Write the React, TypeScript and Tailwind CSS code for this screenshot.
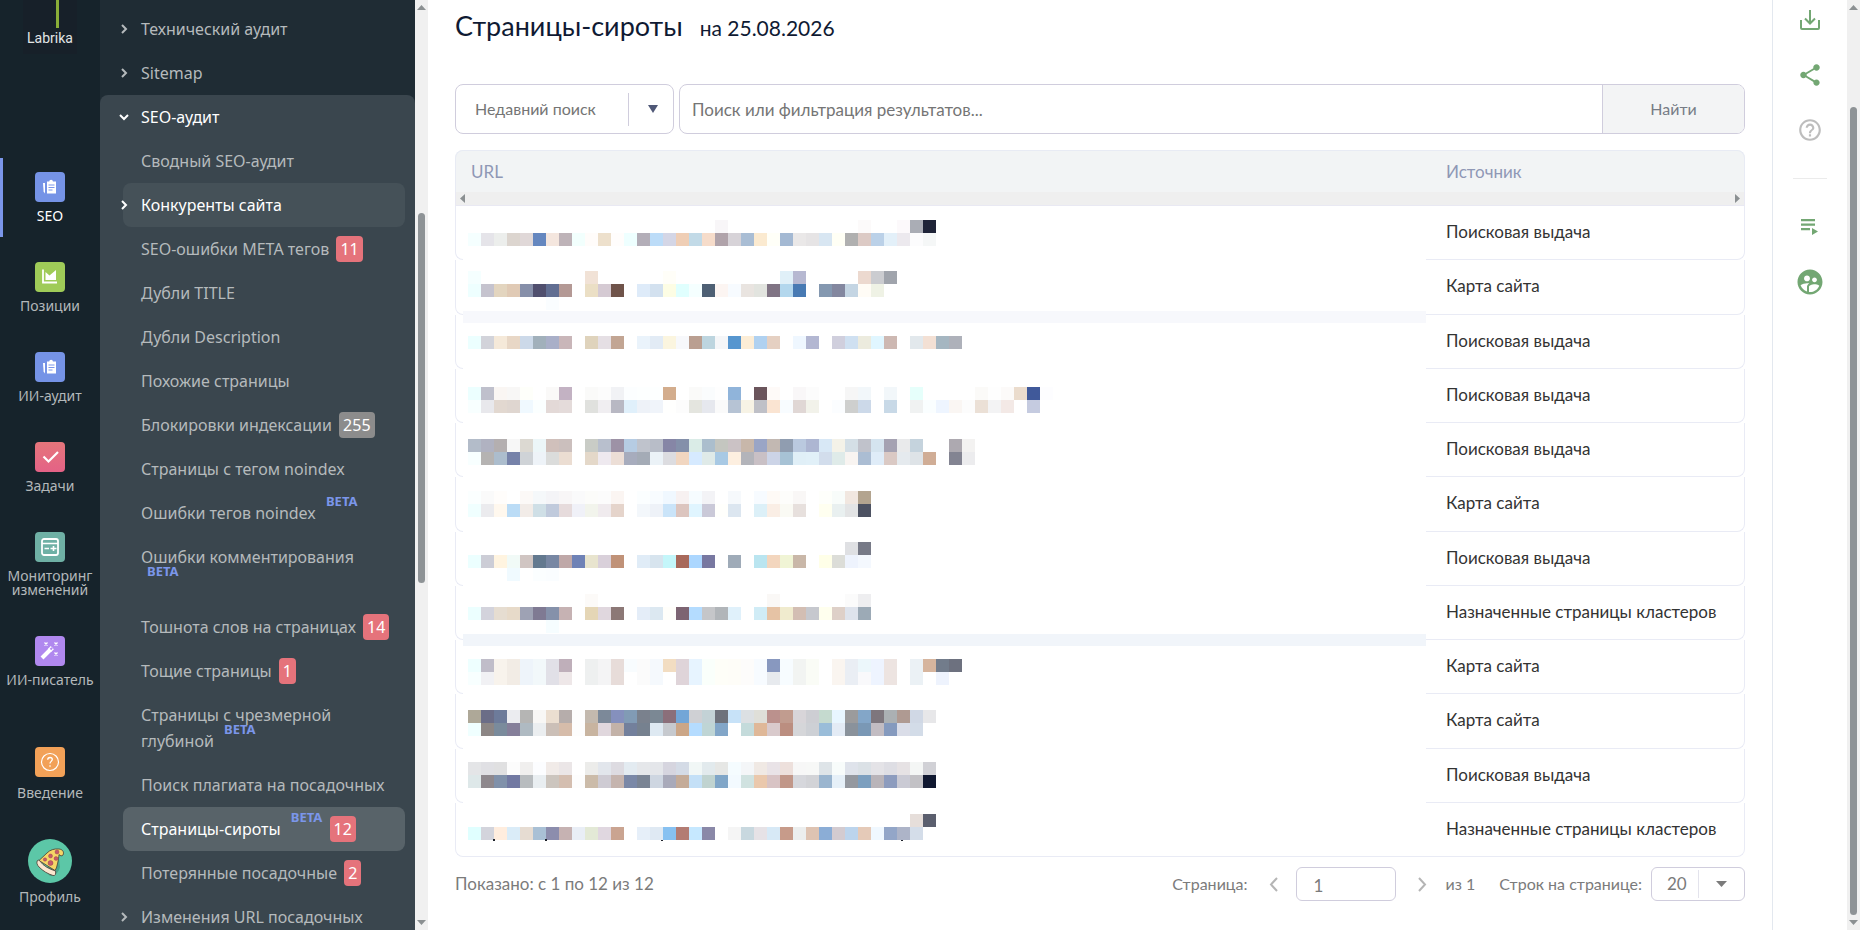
import { MdHelpOutline, MdShare, MdSupervisedUserCircle } from "react-icons/md";

type MenuItem = {
    label: string;
    badge?: string;
    muted?: boolean;
    beta?: boolean;
    arrow?: boolean;
    state?: "hover" | "active";
};

const menuItems: MenuItem[] = [
    { label: "Сводный SEO-аудит" },
    { label: "Конкуренты сайта", arrow: true, state: "hover" },
    { label: "SEO-ошибки META тегов", badge: "11" },
    { label: "Дубли TITLE" },
    { label: "Дубли Description" },
    { label: "Похожие страницы" },
    { label: "Блокировки индексации", badge: "255", muted: true },
    { label: "Страницы с тегом noindex" },
    { label: "Ошибки тегов noindex", beta: true },
    { label: "Ошибки комментирования", beta: true },
    { label: "Тошнота слов на страницах", badge: "14" },
    { label: "Тощие страницы", badge: "1" },
    { label: "Страницы с чрезмерной глубиной", beta: true },
    { label: "Поиск плагиата на посадочных" },
    { label: "Страницы-сироты", beta: true, badge: "12", state: "active" },
    { label: "Потерянные посадочные", badge: "2" },
    { label: "Изменения URL посадочных", arrow: true },
];

const SEARCH = "Поисковая выдача";
const SITEMAP = "Карта сайта";
const CLUSTERS = "Назначенные страницы кластеров";

const sources = [
    SEARCH, SITEMAP, SEARCH, SEARCH, SEARCH, SITEMAP,
    SEARCH, CLUSTERS, SITEMAP, SITEMAP, SEARCH, CLUSTERS,
];

// hidden addresses: [top, first column, colours], every block is 13x13
const mosaic: [number, number, string][] = [
    [14, 19, "f8f6f8"],
    [14, 30, "fcfafa"],
    [14, 33, "fcf9fb aaadb5 1f2438"],
    [27, 0, "f5ffff e5e4e9 eceeec dcd5cf e0d8d8 6587bf f4e6de beb3b8 f2fffd fffcfa ede0cc fffdfc eeffff b3aeb8 bcdcf8 d4d6e6 efceb5 c2dae7 f6dcca b0a3aa d7d3d8 a9bdd4 fbead0 fffff8 a4b9d3 eae8e8 e6e4e5 d8e6f2 fffff5 b0b0b0 dccac5 bbd1e8 e3f0f9 ece9ee fcfcfd f5f7f7"],
    [65, 0, "f5ffff"],
    [65, 9, "f1e2d6"],
    [65, 15, "fffef8"],
    [65, 24, "e0f0f8 b6b8d1"],
    [65, 30, "ecd9cf cbccd0 a0a4ac"],
    [78, 0, "eeffff c5c3ce e3d5bf e0cab5 868fa9 504f6e 616e92 b49995"],
    [78, 9, "ebdfc5 d5cad3 6f534a"],
    [78, 13, "deebf9 d3e1ef fdfde4 e0fffe f5ffff 4e6074 fcf5f2 f7fbff e9e4e0 e2e4df 807484 b3d7ed 487ab3"],
    [78, 27, "8498b0 83879f c4d5e3 fffcf6 eff2e5"],
    [91, 6, "fafdff"],
    [130, 0, "ecffff d2d3da f5e9d9 e8d7c6 ccd9e9 a1b0bb a9afc8 c9b6b9"],
    [130, 9, "dfd3bc e5dfe4 c2a593"],
    [130, 13, "eaf3fb e2ebf5 fbf5df f7f8fb ba9f91 bdd5df f5f6f8 5796cf fcedd6 b0d1f0 e5d0c2"],
    [130, 25, "eff7ff b3b7d2"],
    [130, 28, "d0cfdd cfe0f1 ecebde e0f6ff cdb8b2"],
    [130, 34, "e2e8ec f3e0d4 a5b6c1 aeb1ba"],
    [181, 0, "ecffff bfc0cc faf6f3 f8f7f6 fefffa"],
    [181, 6, "faf9f8 c3b2c3"],
    [181, 9, "fafaf9 fcfcfc f1f2f5 fcfeff fdffff fdffff d3ad8d"],
    [181, 17, "fafaf9 fafcfd fefefe 90b4da"],
    [181, 22, "6b555c fefaf8"],
    [181, 25, "f9f7f8 fcfcfc"],
    [181, 29, "f6f6f6 f2f7fa"],
    [181, 32, "f2f7fa"],
    [181, 34, "e6fffb"],
    [181, 39, "fbfaf8 fefefe fcfaf9 ebdccd 40599a fdfdff"],
    [194, 0, "f8ffff e8e8ec e2d8d0 dfd6d0 f0f9ff fbffff e3d9d7 e4dbda"],
    [194, 9, "e0e1de f0eef1 b8b8c3 e0f0fb eef2f8 f0f4fa fffffe fcfcfc e4e5df e6e8ee fafafa b6c3d4 f7f3e5 bfc0c7 fae4d2 f8fcff e0d7d5 f2f2ea"],
    [194, 28, "fbfdff cecfce ccd9e9"],
    [194, 32, "c8d9e7"],
    [194, 34, "f0f2f2 fafeff eef5ff faf6f3 fcfcfc ebe0d6 f3f3f4 f3e9e6"],
    [194, 43, "c5cbe0"],
    [233, 0, "b3bcc9 b0b2c1 b4afb0 f7f7f7 dcd9d2 ecf6f8 d0c0bb cbbfbd"],
    [233, 9, "c9ccc6 b8bfcd 9d92a6 b6cce3 bfc3cc b8bdc8 8686a6 8490aa daece7 abbecd c4c6c0 cbc2c5 c8b7aa 9aa5c6 c2b8b2 909db0 bac9df adb6d2 d8e8f6 f4f2e8 d4dfe6 c0c2cb d5e4ef a5a2b2 e9eaeb c5d3dd"],
    [233, 37, "ada9b0 f3f2f1"],
    [246, 0, "f8ffff b5b3b2 acbdcd 7682a9 cfd3d7 eef3f8 dbdcdb ebddd2"],
    [246, 9, "e4d8c9 eee9ef ecded6 a7acbd a4abb6 ebf2f7 dcdce0 f1d6c0 d6eaff dfeae8 a8c9e4 fdefe0 b3b4ba c9c0c5 ccd4e7 a7c2d5 e0eff7 e1f0f8 d2ddec dfebe9 f8f4f1 abbdd3 dfecf8 dac9c4 e5eaee dee3e7 d0ad96"],
    [246, 37, "838492 ececee"],
    [285, 0, "fbffff fafafa fffdfb"],
    [285, 4, "fcf9f7 f5f8fa f4f4f7 f8f6f7 fafafb fcfcfa fcfcfc fbf5f2"],
    [285, 13, "fbfeff f8fcff f0f8ff f7f1f1 f6fcff f3f3f6"],
    [285, 20, "f6f9fc"],
    [285, 22, "f7fbff fefaf6 fdfdfb f9f7f6"],
    [285, 27, "fefffb f8fcfa f1e7e0 b3a48f"],
    [298, 0, "f0ffff ebebee fff8ee bbdcf6 f2ece8 cfdfe6 c0cadc e6dbdc f0f1f8 f2f4ec f0ebee e5d4cb"],
    [298, 13, "f3f7fb eef2f8 cae4f9 dcc5bf e0f5ff cac9d8 fffffc dce6f0"],
    [298, 22, "dcf0f8 faeee5 fafaf4 e7e0dd"],
    [298, 27, "fffff0 e9f0f0 e3e4e5 4d5262"],
    [336, 29, "dfe0e3 777a87"],
    [349, 0, "ecffff cccdd6 fff4e0 f1faf7 d0c5c2 63798f 7887a3 bfa8a8 6f82b6 e8e4ce d9d0da c09278"],
    [349, 13, "e0ecf7 d7e4ee c4f6fa a8695b acd7ff 7878a1"],
    [349, 20, "9fabb8"],
    [349, 22, "bae5f0 f3d6be f0f4d5 c9b7a8"],
    [349, 27, "ffffe8 dcddd8 eef3fd f4f8fe"],
    [362, 3, "f0faff"],
    [362, 5, "fbfeff fafdff"],
    [388, 9, "fcfaf8"],
    [388, 23, "faf8f6"],
    [388, 29, "fbfbfb eeeef0"],
    [401, 0, "ecffff d3d3dc e6ddd1 e7dac9 9ea2b4 7f7a93 8591aa c6b2b3"],
    [401, 9, "e5d6b6 e0d7de 8c7876"],
    [401, 13, "e4edf8 dce8f1 fffefa 7d6472 b4dcff c5c6c9 b1b5b9 e0f1fb"],
    [401, 22, "d0ecf6 e6c3a5 f0ebce d3beb3 c6c8ce ffffee ded0c8 dee3ec 9caab6"],
    [414, 6, "f6fdff"],
    [453, 0, "eeffff c0bdc9 f8f3ec f2ece5 eef4fa f2f8fa e1e0e7 bfafba"],
    [453, 9, "eef0f0 f4f4f5 e7dcd9 f8fcfe fbfbfb f5f9fd f2ddc2 dfd4d9 e7f4ff fafffb fefef8 fefdf8 fdfcfb f7fbff 8898bf f7fcff f2f4f2 fafcf6"],
    [453, 28, "faf5f0 eaeef4 ecf7fb eef4ff ede4e1"],
    [453, 34, "ebf1f5 d6b59e 727c8b 6d717f"],
    [466, 0, "f8ffff f1f1f4 f8f3ec f2ece5 eef4fa f2f8fa e1e0e7 eee7e8"],
    [466, 9, "eef0f0 f4f4f5 e7dcd9"],
    [466, 13, "fbfbfb f5f9fd"],
    [466, 16, "dfd4d9 e7f4ff fafffb fefef8 fefdf8 fdfcfb f7fbff e7eaee f7fcff f2f4f2 fafcf6"],
    [466, 28, "faf5f0 eaeef4 f9f9fb eef4ff ede4e1"],
    [466, 34, "ebf1f5"],
    [466, 36, "eef3fd"],
    [504, 0, "aea898 6b6d87 6d7b9a ebecf0 b5b5b4 f8f7f5 ebded0 b6adab fdfdfd c3b9ae 7c8999 8590bd 819bb5 7a818d 7b8894 8b6f7a 73a6d7 cfd0d4 c3d2d6 6e727c c7e2f8 dce0e3 dfdfd8 bb918d c19c8f d8d5d9 cdced3 c5dacf e8f6ff 9b9b9c 83a6c8 7e767d abb0b3 af9a92 d0d8e5 e7e7e9"],
    [517, 0, "f0ffff 8c8685 7a8b9c 857f9a afbac2 ebeef0 cbbfb7 d6bcaa fdfdfd c8b4a0 e0d7dd c3b2a8 73809c 76818f dee9f2 c6c9ce cba687 b5dcff bfd5d5 82a6c8"],
    [517, 21, "c4dbdb dfb898 d9cacc bb8e80 d5d6d9 cdd0d5 9abdd9 e3ebf5 8a929b 7a98b5 c2bcc2 859abe dadde8 d3dce8"],
    [556, 0, "e4e5e7 e0e0e4 e0e0e1 fcfcfc f0efee fcfdff f1ebe8 ebe6e7"],
    [556, 9, "ececea e2e6ec dddbe1 e3ebf1 e5e7ea e4e6ea d6d5df d4dbe6 f1f7f6 e2eaed e6e7e5 f5fcff f4f6f8 f0e9e4 e9e3e7 ede0dc f7f7f7 f7f8f7 dee4e8 f8fcfb dfe3eb dbe1e6 e4e3e7 dedee4 e6e2e4 f4f6f5 d1d1d6"],
    [569, 0, "dee8e9 8e888d 8091aa 7279a2 b8bcbf e9eef1 ccc5be d4beb0 fdfdfd cbbba9 cecbd3 c5b4ae 7a88a7 7a8494 ced6e1 a9aaba c4ab98 c4e0f7 c0d3d0 80a6c8 f3faff d0e2e0 eac8ac d8c3c4 c19789 d6d7dc d2d3d7 9ab5cf e6f0f8 94989f 7c9fbf b9b4b9 8d9cbe cacad4 c2c1c5 101830"],
    [608, 34, "e6deda 5b5f6e"],
    [621, 0, "e0ffff d3d4dc ffedde daecf8 e6dcd2 a9c0d5 8c8dad c6b2b2 e9eef6 e3e9d6 e0d7e0 caa491"],
    [621, 13, "e6eff9 dfe9f3 87c1f1 b37c73 c6e8ff 8a88a8"],
    [621, 20, "f5f5f5 c8d8df e6e2e6 d7e9f6 c79b8a eceeee dec3b2 8badd6 d3cbd0 bcd4ec e5cab8 f0f8ff 93a6c8 adb4c8 d4dde9"],
];

const Mosaic = () => (
    <svg width="620" height="649" aria-hidden="true" shapeRendering="crispEdges">
        {mosaic.map(([top, col, colors]) =>
            colors.split(" ").map((color, i) => (
                <rect key={`${top}-${col + i}`} x={5 + (col + i) * 13} y={top} width="13" height="13" fill={`#${color}`} />
            ))
        )}
        <path d="M30 633h2v2h-2zM82 633h2v2h-2zM198 634h2v1h-2zM438 634h2v1h-2z" fill="#20242c" />
    </svg>
);

const Triangle = ({ className, points }: { className: string; points: string }) => (
    <svg className={className} viewBox="0 0 10 10" preserveAspectRatio="none" aria-hidden="true">
        <polygon points={points} fill="currentColor" />
    </svg>
);

const UP = "5,0 10,10 0,10";
const DOWN = "0,0 10,0 5,10";

const ScrollBar = ({ before, thumb, after }: { before: string; thumb: string; after: string }) => (
    <div className="flex h-full w-[13px] shrink-0 flex-col items-center bg-[#f0f0f0] py-[5px] text-[#8b9092]" aria-hidden="true">
        <Triangle className="h-[5px] w-[9px]" points={UP} />
        <div className={before} />
        <div className={`w-[7px] rounded-full bg-[#8e9396] ${thumb}`} />
        <div className={after} />
        <Triangle className="h-[5px] w-[9px]" points={DOWN} />
    </div>
);

const Chevron = ({ down }: { down?: boolean }) => (
    <svg width="12" height="12" viewBox="0 0 12 12" fill="none" stroke="currentColor" strokeWidth="2" aria-hidden="true">
        <path d={down ? "M2 4l4 4 4-4" : "M4 2l4 4-4 4"} />
    </svg>
);

const ClipboardIcon = () => (
    <svg width="30" height="30" viewBox="0 0 30 30" aria-hidden="true">
        <path d="M12 9.500h2.300c0-1 .8-1.800 1.800-1.800s1.800.8 1.800 1.800H21v12h-9z" fill="#fff" />
        <path d="M8 11h2v8.500l-.5 2-.9-2z" fill="#fff" />
        <path d="M13.500 13h6M13.500 15.500h6M13.500 18h4" stroke="#7b96ea" strokeWidth="1" />
    </svg>
);

const ChartIcon = () => (
    <svg width="30" height="30" viewBox="0 0 30 30" aria-hidden="true">
        <path d="M8 7.500v13h14" stroke="#fff" strokeWidth="1.800" fill="none" />
        <path d="M10.500 10l4 3.500L21 8v10H10.500z" fill="#fff" />
    </svg>
);

const CheckIcon = () => (
    <svg width="30" height="30" viewBox="0 0 30 30" aria-hidden="true">
        <path d="M8.500 14.500l5 5L23 10" stroke="#fff" strokeWidth="2.200" fill="none" />
    </svg>
);

const MonitorIcon = () => (
    <svg width="30" height="30" viewBox="0 0 30 30" fill="none" stroke="#fff" aria-hidden="true">
        <rect x="7" y="7" width="16" height="16" rx="2" strokeWidth="1.800" />
        <path d="M7 11.500h16M9.500 16.500h4.500M15.500 16.500h6M18.500 14v5" strokeWidth="1.600" />
    </svg>
);

const WandIcon = () => (
    <svg width="30" height="30" viewBox="0 0 30 30" fill="none" stroke="#fff" aria-hidden="true">
        <path d="M7 22L15.500 13.500" strokeWidth="4" />
        <path d="M14.500 14.500l2.800-2.800" strokeWidth="4.500" />
        <path d="M15.500 13.500l1.600-1.600" stroke="#b088ef" strokeWidth="2" />
        <path d="M9.500 6.500l3 3m0-3l-3 3M19.500 6.500l3 3m0-3l-3 3M19.500 16.500l3 3m0-3l-3 3" strokeWidth="1.300" />
    </svg>
);

const QuestionIcon = () => (
    <svg width="30" height="30" viewBox="0 0 30 30" fill="none" stroke="#fff" aria-hidden="true">
        <circle cx="15" cy="15" r="8.500" strokeWidth="1.200" />
        <path d="M12.700 12.800c0-1.400 1-2.300 2.300-2.300s2.300.9 2.300 2.100c0 1.700-2.300 1.900-2.300 3.900M15 18.200v1.600" strokeWidth="1.300" />
    </svg>
);

const PizzaAvatar = () => (
    <svg width="44" height="44" viewBox="0 0 44 44" aria-hidden="true">
        <circle cx="22" cy="22" r="22" fill="#5cc7a7" />
        <path d="M16 30l15-10 1 8c-1 5-5 9-10 9z" fill="#48a68a" />
        <path d="M11 21.500L19 14c3-3 7-4.500 12-4 3.500.3 5.500 3 4 6-1 1.500-3 .8-4-.5-.6 6-1.300 8-1.800 10.500-.4 2-1 4-2.200 5.500z" fill="#f6d667" stroke="#4a3b33" strokeWidth=".8" />
        <g fill="#c75a6b" stroke="#8d3b45" strokeWidth=".4">
            <circle cx="29" cy="13" r="2" />
            <circle cx="22.500" cy="17" r="2" />
            <circle cx="28" cy="19.500" r="1.900" />
            <circle cx="17" cy="20.500" r="1.700" />
            <circle cx="22.500" cy="24" r="2.500" />
        </g>
        <path d="M9.500 21.500c-1.300 2-.4 4.500 1.500 6.500 4 4 9 7 14 8.500 2.500.5 2.800-1.500 2.600-4.500C21 30 15.500 27 12 22.200c-.6-1-1.800-1.400-2.500-.7z" fill="#fbe6cf" stroke="#4a3b33" strokeWidth=".8" />
    </svg>
);

type RailItemProps = {
    label: string;
    color?: string;
    active?: boolean;
    className?: string;
    children: React.ReactNode;
};

const RailItem = ({ label, color, active, className = "gap-[7px]", children }: RailItemProps) => (
    <a
        href="#"
        className={`flex flex-col items-center border-l-[3px] py-[14px] pr-[3px] text-center text-sm leading-[14px] ${active ? "border-[#7b96ea] text-white" : "border-transparent text-[#b3b8ba]"} ${className}`}
    >
        <span className={`overflow-hidden rounded ${color ?? ""}`}>{children}</span>
        {label}
    </a>
);

const Rail = () => (
    <nav className="flex w-[100px] shrink-0 flex-col gap-[11px] bg-[#16232b]">
        <a href="#" className="mx-auto flex h-[54px] w-[54px] flex-col items-center bg-[#172029]">
            <span className="ml-[14px] h-[28px] w-[3px] shrink-0 bg-[#8aae38]" />
            <span className="font-['Roboto',sans-serif] text-sm leading-5 text-[#e2e5e6]">Labrika</span>
        </a>
        <RailItem label="SEO" color="bg-[#7593e6]" active className="mt-[93px] gap-[7px]"><ClipboardIcon /></RailItem>
        <RailItem label="Позиции" color="bg-[#9fcb58]"><ChartIcon /></RailItem>
        <RailItem label="ИИ-аудит" color="bg-[#7593e6]"><ClipboardIcon /></RailItem>
        <RailItem label="Задачи" color="bg-linear-to-b from-[#e5757b] to-[#e46286]"><CheckIcon /></RailItem>
        <RailItem label="Мониторинг изменений" color="bg-[#6fb0a5]"><MonitorIcon /></RailItem>
        <RailItem label="ИИ-писатель" color="bg-[#b088ef]"><WandIcon /></RailItem>
        <RailItem label="Введение" color="bg-[#f2a158]" className="mt-[21px] gap-[9px]"><QuestionIcon /></RailItem>
        <RailItem label="Профиль"><PizzaAvatar /></RailItem>
    </nav>
);

const MenuLink = ({ item }: { item: MenuItem }) => {
    const look =
        item.state === "active" ? "bg-[#586369] text-white"
        : item.state === "hover" ? "bg-[#455158] text-white"
        : "text-[#b5babc]";
    return (
        <li>
            <a href="#" className={`relative mr-[10px] ml-[23px] block rounded-lg py-[9px] pr-[12px] pl-[18px] ${look}`}>
                {item.arrow && <span className="absolute top-[16px] -left-[5px]"><Chevron /></span>}
                {item.label}
                {item.beta && <>{" "}<sup className="-top-[13px] ml-[6px] text-[13px] font-bold text-[#7b96ea]">BETA</sup></>}
                {item.badge && (
                    <>
                        {" "}
                        <span className={`ml-[3px] inline-block rounded px-1 text-white ${item.muted ? "bg-[#8c8c8c]" : "bg-[#e5737b]"}`}>{item.badge}</span>
                    </>
                )}
            </a>
        </li>
    );
};

const TopLink = ({ label }: { label: string }) => (
    <a href="#" className="flex h-11 items-center gap-[11px] pl-[18px] text-[#b5babc]">
        <Chevron />
        {label}
    </a>
);

const Sidebar = () => (
    <nav className="w-[315px] shrink-0 overflow-hidden bg-[#1f2c34] pt-[7px] text-base leading-[26px]">
        <TopLink label="Технический аудит" />
        <TopLink label="Sitemap" />
        <div className="rounded-t-lg bg-[#3a464e]">
            <a href="#" className="flex h-11 items-center gap-[11px] pl-[18px] text-white">
                <Chevron down />
                SEO-аудит
            </a>
            <ul>
                {menuItems.map((item) => <MenuLink key={item.label} item={item} />)}
            </ul>
        </div>
    </nav>
);

const SearchBar = () => (
    <div className="flex h-[50px] gap-[5px] text-[#757575]">
        <button className="flex w-[219px] items-center rounded-lg border border-[#d0cddd] pl-[19px] text-base">
            Недавний поиск
            <span className="ml-auto flex h-[33px] w-[45px] items-center justify-center border-l border-[#d0cddd] pl-1 text-[#4f5877]">
                <Triangle className="h-[8px] w-[10px]" points={DOWN} />
            </span>
        </button>
        <form className="flex flex-1 overflow-hidden rounded-lg border border-[#d0cddd]">
            <input
                type="text"
                aria-label="Поиск"
                placeholder="Поиск или фильтрация результатов..."
                className="flex-1 px-3 pt-[2px] text-[17px] placeholder:text-[#757575]"
            />
            <button type="button" className="w-[142px] border-l border-[#d0cddd] bg-[#f3f4f5] text-base text-[#777c86]">Найти</button>
        </form>
    </div>
);

const ResultsTable = () => (
    <div className="relative mt-4">
        <table className="w-full table-fixed border-separate border-spacing-0 text-left text-[17px] text-[#333]">
            <colgroup>
                <col />
                <col className="w-[319px]" />
            </colgroup>
            <thead className="bg-[#f2f4f5] text-[#8f98b5]">
                <tr className="h-[42px]">
                    <th className="rounded-tl-lg border-t border-l border-[#e8ebf4] pl-[15px] font-normal">URL</th>
                    <th className="rounded-tr-lg border-t border-r border-[#e8ebf4] pl-5 font-normal">Источник</th>
                </tr>
                <tr className="h-[14px]">
                    <td colSpan={2} className="border border-t-0 border-[#e9e9f3] bg-[#efefef] p-0">
                        <div className="flex justify-between px-1 text-[#8b9092]">
                            <Triangle className="h-[9px] w-[5px]" points="10,0 10,10 0,5" />
                            <Triangle className="h-[9px] w-[5px]" points="0,0 10,5 0,10" />
                        </div>
                    </td>
                </tr>
            </thead>
            <tbody>
                {sources.map((source, i) => (
                    <tr key={i} className="h-[54px] nth-[4n+2]:h-[55px]">
                        <td className="rounded-bl-lg border-b border-l border-[#e9ebf5]" />
                        <td className="rounded-br-lg border-r border-b border-[#e9ebf5] pb-[2px] pl-5 whitespace-nowrap">{source}</td>
                    </tr>
                ))}
            </tbody>
        </table>
        <div className="absolute top-[56px] right-[319px] bottom-px left-[8px] overflow-hidden bg-white">
            <div className="absolute inset-x-0 top-[105px] h-[12px] bg-[#f7f8fc]" />
            <div className="absolute inset-x-0 top-[428px] h-[12px] bg-[#f1f5fa]" />
            <div className="relative"><Mosaic /></div>
        </div>
    </div>
);

const PageArrow = ({ next }: { next?: boolean }) => (
    <button aria-label={next ? "Следующая страница" : "Предыдущая страница"} className="flex w-[49px] items-center justify-center pl-1 text-[#b5b5b5]">
        <svg width="9" height="15" viewBox="0 0 9 15" fill="none" stroke="currentColor" strokeWidth="2" aria-hidden="true">
            <path d={next ? "M1 1l6 6.500-6 6.500" : "M8 1L2 7.500 8 14"} />
        </svg>
    </button>
);

const Pagination = () => (
    <div className="mt-[10px] flex h-[34px] items-center text-base text-[#7b7b7b]">
        <p className="text-[17px]">Показано: с 1 по 12 из 12</p>
        <label htmlFor="page" className="ml-auto">Страница:</label>
        <PageArrow />
        <input id="page" type="text" defaultValue="1" className="h-full w-[100px] rounded-md border border-[#d0cddd] px-4 pt-[2px] text-[17px]" />
        <PageArrow next />
        <span className="mr-6">из 1</span>
        <label htmlFor="rows" className="mr-[9px]">Строк на странице:</label>
        <div className="relative flex h-full w-[94px] items-center rounded-md border border-[#d0cddd]">
            <select id="rows" className="h-full w-full appearance-none pl-[15px] text-[17px]" defaultValue="20">
                <option>20</option>
                <option>50</option>
            </select>
            <span className="pointer-events-none absolute inset-y-[2px] right-0 flex w-[46px] items-center justify-center border-l border-[#e3e3ec]">
                <Triangle className="h-[6px] w-[11px]" points={DOWN} />
            </span>
        </div>
    </div>
);

const Toolbar = () => (
    <aside className="flex w-[75px] shrink-0 flex-col items-center border-l border-[#e3e8ef] pt-[9px] text-[#73a773]">
        <button aria-label="Скачать">
            <svg width="22" height="22" viewBox="0 0 22 22" fill="none" stroke="currentColor" strokeWidth="2" aria-hidden="true">
                <path d="M11 1v13M6 9.500l5 5 5-5M2 11v8q0 1 1 1h16q1 0 1-1v-8" />
            </svg>
        </button>
        <button aria-label="Поделиться" className="mt-[31px]"><MdShare size={26} /></button>
        <button aria-label="Помощь" className="mt-[29px] text-[#bdbdbd]"><MdHelpOutline size={26} /></button>
        <hr className="mt-[35px] w-[34px] border-[#ebebeb]" />
        <button aria-label="Список" className="mt-[38px]">
            <svg width="20" height="20" viewBox="0 0 20 20" fill="currentColor" aria-hidden="true">
                <path d="M1 2h14v2.200H1zM1 6.500h14v2.200H1zM1 11h9v2.200H1zM12 11l6 3.500-6 3.500z" />
            </svg>
        </button>
        <button aria-label="Пользователи" className="mt-[30px]"><MdSupervisedUserCircle size={30} /></button>
    </aside>
);

const App = () => {
    return (
        <div className="flex h-screen overflow-hidden bg-white font-['Noto_Sans',sans-serif]">
            <Rail />
            <Sidebar />
            <ScrollBar before="flex-[203]" thumb="flex-[370]" after="flex-[337]" />
            <main className="min-w-0 flex-1 px-[27px] font-['Lato',sans-serif]">
                <h1 className="flex h-[84px] items-baseline gap-[17px] pt-2 text-[27px] leading-9 text-[#0f1a33]">
                    Страницы-сироты
                    <span className="text-[21px]">на 25.08.2026</span>
                </h1>
                <SearchBar />
                <ResultsTable />
                <Pagination />
            </main>
            <Toolbar />
            <ScrollBar before="flex-[97]" thumb="flex-[807]" after="flex-[5]" />
        </div>
    );
};

export default App;
